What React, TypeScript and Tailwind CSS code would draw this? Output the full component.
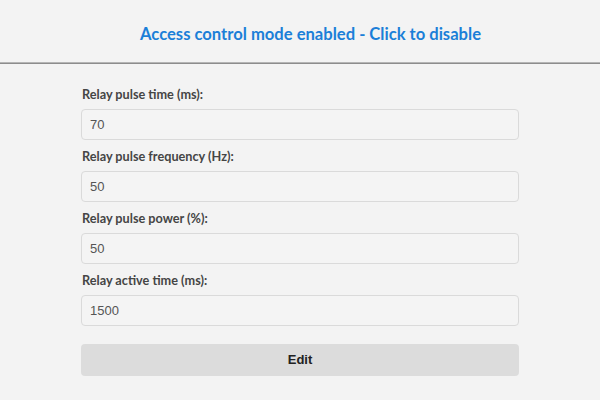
const fields = [
  { label: "Relay pulse time (ms):", value: "70" },
  { label: "Relay pulse frequency (Hz):", value: "50" },
  { label: "Relay pulse power (%):", value: "50" },
  { label: "Relay active time (ms):", value: "1500" },
];

export default function App() {
  return (
    <div className="w-[600px] h-[400px] bg-[#f3f3f3] font-['Lato',sans-serif] overflow-hidden">
      {/* Header */}
      <div className="h-[62px] flex items-center justify-center pt-[7px] pl-[21px]">
        <button className="text-[16.6px] font-bold text-[#1b7fd8]">
          Access control mode enabled - Click to disable
        </button>
      </div>
      <div className="h-[2px] bg-[#8c8c8c] border-t border-[#b5b5b5]" />

      <div className="w-[438px] ml-[81px] pt-[22px] flex flex-col">
        {fields.map((f) => (
          <div key={f.label} className="flex flex-col">
            <label className="h-[16px] text-[12.7px] font-bold text-[#454545] leading-[16px] pl-[1px]">
              {f.label}
            </label>
            <input
              readOnly
              value={f.value}
              className="mt-[7px] mb-[8px] h-[31px] w-full rounded-[4px] border border-[#dadada] bg-[#f4f4f4] px-[8px] text-[13px] text-[#555] font-['Liberation_Sans',sans-serif] outline-none"
            />
          </div>
        ))}
        <button className="mt-[10px] h-[32px] w-full rounded-[4px] bg-[#dcdcdc] text-[13px] font-bold text-[#222] font-['Liberation_Sans',sans-serif]">
          Edit
        </button>
      </div>
    </div>
  );
}
